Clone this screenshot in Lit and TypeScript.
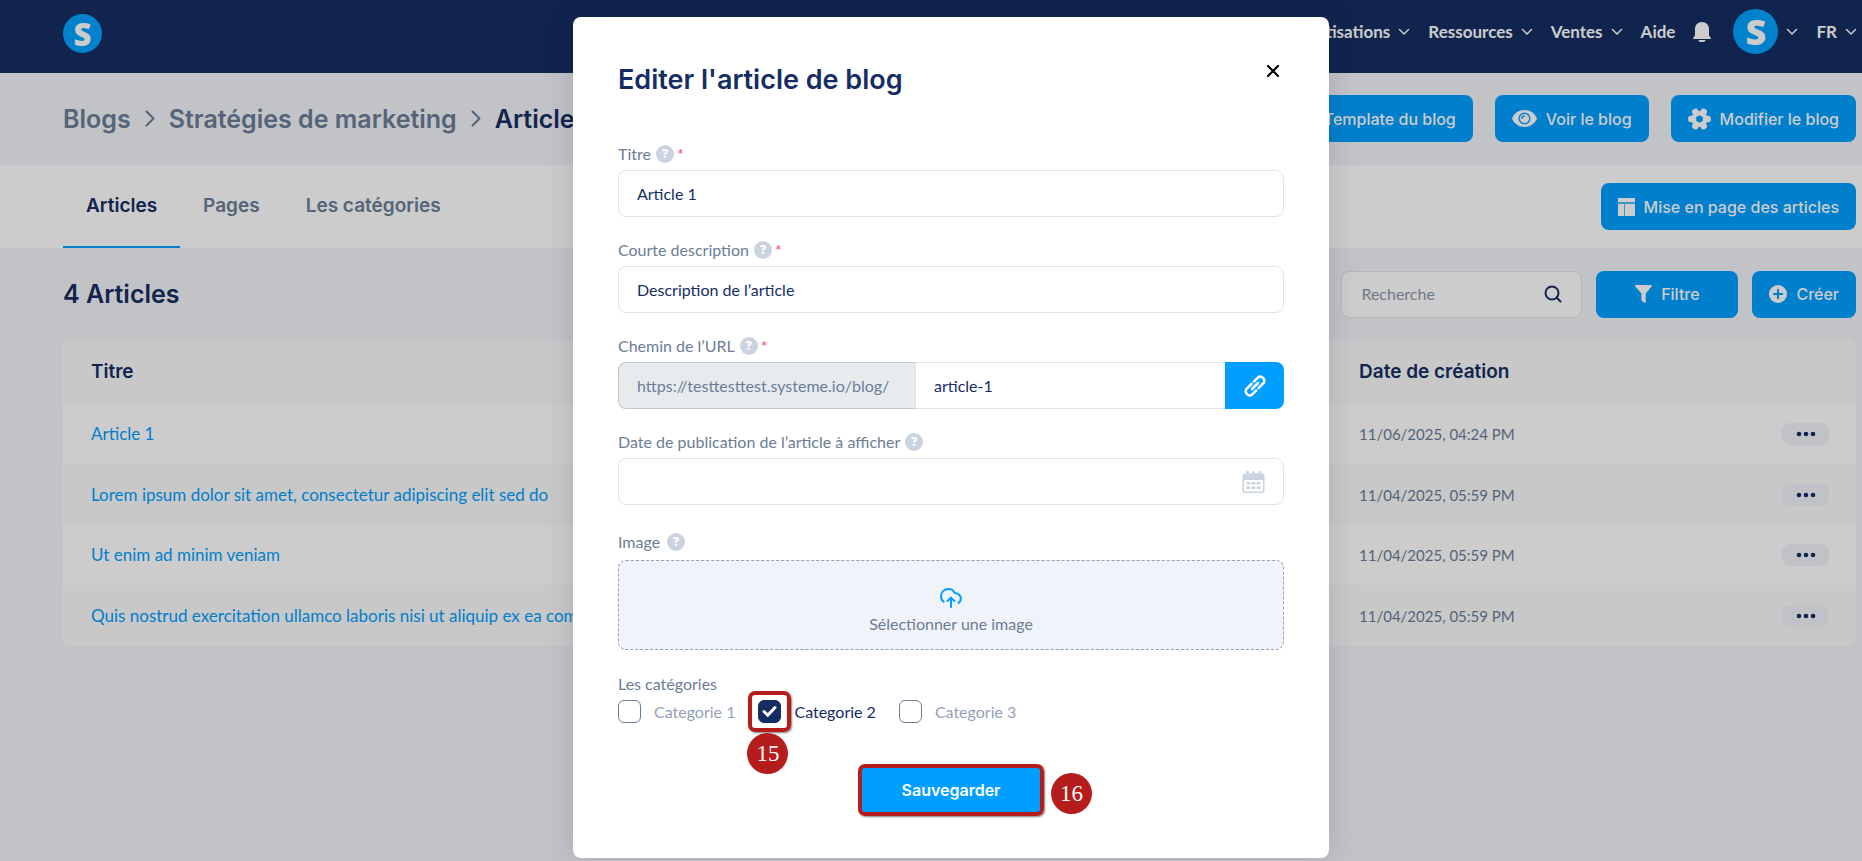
import { LitElement, html, css, svg } from "lit";
import { customElement, state } from "lit/decorators.js";

const chevronDown = html`<svg class="chev" width="12" height="8" viewBox="0 0 12 8" aria-hidden="true">
  <path d="M1.5 1.5 6 6l4.500-4.500" fill="none" stroke="currentColor" stroke-width="1.500" stroke-linecap="round" stroke-linejoin="round"/></svg>`;

const chevronRight = html`<svg width="10" height="17" viewBox="0 0 10 17" aria-hidden="true">
  <path d="M1.500 1.500 8.500 8.500l-7 7" fill="none" stroke="currentColor" stroke-width="2" stroke-linecap="round" stroke-linejoin="round"/></svg>`;

const bell = html`<svg width="18" height="20" viewBox="0 0 18 20" aria-hidden="true">
  <path d="M9 0C4.800 0 2 3 2 7v5.500c0 1.300-.6 2-1.400 2.700-1 .9-.6 1.800.6 1.800h15.600c1.200 0 1.600-.9.6-1.800-.8-.7-1.400-1.400-1.400-2.700V7c0-4-2.800-7-7-7zM5.500 18h7c0 1.200-1 2-2 2h-3c-1 0-2-.8-2-2z" fill="currentColor"/></svg>`;

const eye = html`<svg width="25" height="17" viewBox="0 0 25 17" aria-hidden="true">
  <path d="M12.500 0C7 0 2.600 3 .3 7.700a1.800 1.800 0 0 0 0 1.600C2.600 14 7 17 12.500 17S22.400 14 24.700 9.300a1.800 1.800 0 0 0 0-1.600C22.400 3 18 0 12.500 0z" fill="currentColor"/>
  <circle cx="12.500" cy="8.500" r="6" fill="#009fff"/><circle cx="12.500" cy="8.500" r="4.600" fill="currentColor"/>
  <path d="M12.500 5.900a2.600 2.600 0 0 0-2.600 2.600" fill="none" stroke="#009fff" stroke-width="1.300" stroke-linecap="round"/></svg>`;

const gear = html`<svg width="23" height="22" viewBox="0 0 23 22" aria-hidden="true">
  <g fill="currentColor">${[30, 90, 150, 210, 270, 330].map(
    (a) => svg`<rect x="8.300" y="-.3" width="6.400" height="8" rx="2.500" transform="rotate(${a} 11.500 11)"/>`
  )}</g>
  <circle cx="11.500" cy="11" r="5.900" fill="none" stroke="currentColor" stroke-width="4.400"/></svg>`;

const layoutIcon = html`<svg width="17" height="18" viewBox="0 0 17 18" aria-hidden="true">
  <path d="M0 0h17v4H0zM0 6h6v12H0zM7 6h10v12H7z" fill="currentColor"/>
  <path d="M0 4h17v2H0zM6 6h1v12H6z" fill="currentColor" opacity=".3"/></svg>`;

const funnel = html`<svg width="17" height="18" viewBox="0 0 17 18" aria-hidden="true">
  <path d="M.8 0h15.400c.7 0 1 .8.600 1.300L10.700 8.500v8.700c0 .6-.7 1-1.200.6l-2.700-2a1 1 0 0 1-.4-.8V8.500L.2 1.300C-.3.800.1 0 .8 0z" fill="currentColor"/></svg>`;

const plus = html`<svg width="18" height="18" viewBox="0 0 18 18" aria-hidden="true">
  <circle cx="9" cy="9" r="9" fill="currentColor"/>
  <path d="M9 4.800v8.400M4.800 9h8.400" stroke="#009fff" stroke-width="2" stroke-linecap="round"/></svg>`;

const magnifier = html`<svg class="magnifier" width="18" height="18" viewBox="0 0 18 18" aria-hidden="true">
  <circle cx="8" cy="8" r="6.500" fill="none" stroke="currentColor" stroke-width="2"/>
  <path d="M12.500 12.500 16.500 16.500" stroke="currentColor" stroke-width="2" stroke-linecap="round"/></svg>`;

const dots = html`<svg width="20" height="6" viewBox="0 0 20 6" aria-hidden="true">
  <g fill="currentColor"><circle cx="3" cy="3" r="2.300"/><circle cx="10" cy="3" r="2.300"/><circle cx="17" cy="3" r="2.300"/></g></svg>`;

const linkIcon = html`<svg width="22" height="22" viewBox="0 0 22 22" aria-hidden="true">
  <g fill="none" stroke="currentColor" stroke-width="2.500" stroke-linecap="round" stroke-linejoin="round">
  <path d="M8 14l6-6"/>
  <path d="M9.800 6.600l4-4a4 4 0 0 1 5.600 5.600l-4.800 4.800"/>
  <path d="M12.200 15.400l-4 4a4 4 0 0 1-5.600-5.600l4.800-4.800"/></g></svg>`;

const calendar = html`<svg class="calendar" width="23" height="22" viewBox="0 0 23 22" aria-hidden="true">
  <path d="M3 2.500h17a2.500 2.500 0 0 1 2.500 2.500v14.500a2.500 2.500 0 0 1-2.500 2.500H3A2.500 2.500 0 0 1 .5 19.500V5A2.500 2.500 0 0 1 3 2.500zM2 9v10.300c0 .8.500 1.200 1.200 1.200h16.600c.7 0 1.200-.4 1.200-1.200V9z" fill="currentColor" fill-rule="evenodd"/>
  <path d="M5.500 1.300v3M11.500 1.300v3M17.500 1.300v3" stroke="currentColor" stroke-width="2.600" stroke-linecap="round"/>
  <path d="M4.500 12.300h3.800M9.600 12.300h3.800M14.700 12.300h3.800M4.500 16.800h3.800M9.600 16.800h3.800M14.700 16.800h3.800" stroke="currentColor" stroke-width="2.600"/></svg>`;

const upload = html`<svg width="22" height="20" viewBox="0 0 22 20" aria-hidden="true">
  <g fill="none" stroke="currentColor" stroke-width="2" stroke-linecap="round" stroke-linejoin="round">
  <path d="M3.600 13.800C1.800 12.500 1 10.600 1 8.300 1 4.200 4.200 1 8.300 1c2.900 0 5.300 1.500 6.300 4 3.400 0 6.200 2.300 6.200 5.500 0 1.900-.8 3.400-2.300 4.400"/>
  <path d="M11 19V10M7.500 13 11 9.600 14.500 13"/></g></svg>`;

const help = html`<button class="help" type="button" aria-label="Aide">?</button>`;
const star = html`<span class="star">*</span>`;

interface Article {
  title: string;
  date: string;
}

@customElement("app-root")
export class AppRoot extends LitElement {
  @state() private articles: Article[] = [
    { title: "Article 1", date: "11/06/2025, 04:24 PM" },
    { title: "Lorem ipsum dolor sit amet, consectetur adipiscing elit sed do", date: "11/04/2025, 05:59 PM" },
    { title: "Ut enim ad minim veniam", date: "11/04/2025, 05:59 PM" },
    { title: "Quis nostrud exercitation ullamco laboris nisi ut aliquip ex ea commodo", date: "11/04/2025, 05:59 PM" },
  ];

  static styles = css`
    :host {
      --navy: #152d62;
      --blue: #009fff;
      --slate: #6b7d96;
      --edge: #e0e4e6;
      display: block;
      position: relative;
      min-height: 100vh;
      overflow: hidden;
      background: #f3f4f9;
      color: var(--navy);
      font: 16px/24px Lato, "Open Sans", sans-serif;
    }
    *, *::before, *::after { box-sizing: border-box; }
    svg { display: block; flex: none; }
    a { color: inherit; text-decoration: none; }
    button, input { font: inherit; color: inherit; margin: 0; }
    button { border: 0; padding: 0; background: none; cursor: pointer; }
    h1, h2, ol, ul { margin: 0; padding: 0; list-style: none; }

    .navbar {
      display: flex;
      justify-content: space-between;
      padding: 9px 5px 19px 63px;
      background: var(--navy);
      color: #fff;
    }
    .logo, .avatar {
      display: grid;
      place-items: center;
      border-radius: 50%;
      background: #00a3ff;
      color: #fff;
      font-family: "Open Sans", sans-serif;
      font-weight: 800;
    }
    .logo { width: 39px; height: 39px; margin-top: 5px; font-size: 31px; }
    .avatar { width: 45px; height: 45px; font-size: 36px; }
    .menu { display: flex; align-items: center; gap: 18px; font-size: 17px; font-weight: 700; }
    .menu a, .menu button { display: flex; align-items: center; gap: 8px; font-weight: 700; }
    .menu .notify { margin-right: 4px; }

    .bar {
      display: flex;
      align-items: center;
      justify-content: space-between;
      padding: 0 6px 0 63px;
    }
    .heading { height: 92px; padding-bottom: 1px; }
    .tabs-bar { height: 83px; background: #fff; }
    .tools { height: 92px; }
    .crumbs, .crumbs li { display: flex; align-items: center; gap: 14px; }
    .crumbs { font: 600 25px/32px Inter, sans-serif; color: var(--slate); white-space: nowrap; }
    .crumbs .current { color: var(--navy); }
    .actions { display: flex; gap: 22px; }
    .btn {
      display: flex;
      align-items: center;
      justify-content: center;
      gap: 9px;
      height: 47px;
      padding: 0 17px;
      border-radius: 8px;
      background: var(--blue);
      color: #fff;
      font: 500 16px/24px Inter, sans-serif;
      white-space: nowrap;
    }
    .tabs { display: flex; align-self: stretch; }
    .tab {
      display: flex;
      align-items: center;
      padding: 0 23px;
      border-bottom: 2px solid transparent;
      color: var(--slate);
      font: 600 19px/24px Inter, sans-serif;
    }
    .tab.active { color: var(--navy); border-color: var(--blue); }
    .count { font: 600 25px/32px Inter, sans-serif; }
    .filters { display: flex; gap: 14px; }
    .search {
      display: flex;
      align-items: center;
      width: 241px;
      height: 47px;
      padding: 0 19px;
      border: 1px solid var(--edge);
      border-radius: 8px;
      background: #fff;
    }
    .search input { flex: 1; min-width: 0; border: 0; padding: 0; background: none; outline: 0; }
    .search input::placeholder { color: #8d99a8; opacity: 1; }
    .filter { width: 142px; }

    .list { padding: 0 6px 0 63px; }
    table {
      width: 100%;
      border-collapse: collapse;
      border-radius: 8px;
      overflow: hidden;
      background: #fff;
      table-layout: fixed;
    }
    th, td { padding: 0 28px; text-align: left; }
    tbody tr { height: 60px; }
    thead tr { height: 64px; background: #fafbfc; }
    tbody tr:nth-child(even) { height: 61px; background: #fafbfc; }
    th { font: 600 19px/24px Inter, sans-serif; }
    td { color: var(--slate); font-size: 15px; }
    td a { color: var(--blue); font-size: 17px; white-space: nowrap; }
    .date-col { width: 410px; }
    .more-col { width: 115px; }
    .more {
      display: grid;
      place-items: center;
      width: 47px;
      height: 22px;
      margin-left: auto;
      border-radius: 8px;
      background: #f1f3f9;
      color: var(--navy);
    }
    td:last-child { padding: 0 27px 0 0; }

    .overlay {
      position: absolute;
      inset: 0;
      display: flex;
      align-items: flex-start;
      justify-content: center;
      padding: 17px 0 0 40px;
      background: rgba(0, 0, 0, 0.2);
    }
    .modal {
      width: 756px;
      padding: 47px 45px 44px;
      border-radius: 8px;
      background: #fff;
      box-shadow: 0 0 30px rgba(20, 40, 60, 0.16);
    }
    .modal-head {
      display: flex;
      align-items: flex-start;
      justify-content: space-between;
      margin-bottom: 46px;
    }
    .modal-head h2 { font: 600 27px/32px Inter, sans-serif; }
    .close { padding: 1px 5px; color: #000; }
    .form { display: flex; flex-direction: column; }
    .field { margin-bottom: 21px; }
    .label {
      display: flex;
      align-items: center;
      gap: 5px;
      height: 24px;
      margin-bottom: 4px;
      color: var(--slate);
    }
    .help {
      width: 18px;
      height: 18px;
      border-radius: 50%;
      background: #cad4e1;
      color: #fff;
      font: 800 12px/18px "Open Sans", sans-serif;
      text-align: center;
    }
    .star { color: #ff3d71; margin-left: -2px; }
    .box {
      display: flex;
      align-items: center;
      width: 100%;
      height: 47px;
      padding: 0 18px;
      border: 1px solid var(--edge);
      border-radius: 8px;
      background: #fff;
      outline: 0;
    }
    .group { display: flex; }
    .prefix {
      display: flex;
      align-items: center;
      width: 298px;
      border: 1px solid #bec8cf;
      border-right-color: var(--edge);
      border-radius: 8px 0 0 8px;
      padding: 0 18px;
      background: #e8ebee;
      color: var(--slate);
    }
    .group .box { flex: 1; width: auto; min-width: 0; border-left: 0; border-right: 0; border-radius: 0; }
    .generate {
      display: grid;
      place-items: center;
      width: 59px;
      border-radius: 0 8px 8px 0;
      background: var(--blue);
      color: #fff;
    }
    .date input { flex: 1; min-width: 0; border: 0; padding: 0; outline: 0; }
    .calendar { color: #cad4e1; }
    .image { margin-top: 4px; margin-bottom: 22px; }
    .image .label { gap: 7px; margin-bottom: 6px; }
    .drop {
      display: flex;
      flex-direction: column;
      align-items: center;
      width: 100%;
      height: 90px;
      padding-top: 27px;
      gap: 4px;
      border: 1px dashed #90a4ae;
      border-radius: 8px;
      background: #f0f3f9;
      color: var(--slate);
    }
    .drop svg { color: var(--blue); }
    .checks { display: flex; gap: 23px; margin-bottom: 43px; }
    .check { display: flex; align-items: center; gap: 13px; height: 23px; color: #94a1b8; }
    .check.on { color: var(--navy); }
    .check input {
      appearance: none;
      width: 23px;
      height: 23px;
      border: 1px solid var(--slate);
      border-radius: 6px;
      background: #fff;
    }
    .check input:checked { border-color: var(--navy); background: var(--navy); }
    .tick { position: relative; display: grid; }
    .tick svg { position: absolute; inset: 5px 4px; color: #fff; pointer-events: none; }
    .frame {
      position: absolute;
      inset: -9px -10px;
      border: 4px solid #b51c1c;
      border-radius: 7px;
      box-shadow: 1px 1px 2px rgba(0, 0, 0, 0.5);
      pointer-events: none;
    }
    .step {
      position: absolute;
      display: grid;
      place-items: center;
      width: 41px;
      height: 41px;
      border-radius: 50%;
      background: #b51c1c;
      color: #fff;
      font: 23px/23px "Liberation Serif", serif;
    }
    .step-check { top: 33px; left: -11px; }
    .submit { position: relative; align-self: center; }
    .save { width: 182px; height: 48px; font-weight: 600; }
    .submit .frame { inset: -2px; }
    .step-save { top: 7px; left: 191px; }
  `;

  render() {
    return html`
      <header class="navbar">
        <a class="logo" href="#" aria-label="Accueil">S</a>
        <nav class="menu">
          <a href="#">Automatisations ${chevronDown}</a>
          <a href="#">Ressources ${chevronDown}</a>
          <a href="#">Ventes ${chevronDown}</a>
          <a href="#">Aide</a>
          <button class="notify" type="button" aria-label="Notifications">${bell}</button>
          <button type="button" aria-label="Compte"><span class="avatar">S</span>${chevronDown}</button>
          <button type="button">FR ${chevronDown}</button>
        </nav>
      </header>

      <section class="bar heading">
        <ol class="crumbs">
          <li><a href="#">Blogs</a>${chevronRight}</li>
          <li><a href="#">Stratégies de marketing</a>${chevronRight}</li>
          <li class="current">Article</li>
        </ol>
        <div class="actions">
          <button class="btn" type="button">${layoutIcon}Template du blog</button>
          <button class="btn" type="button">${eye}Voir le blog</button>
          <button class="btn" type="button">${gear}Modifier le blog</button>
        </div>
      </section>

      <section class="bar tabs-bar">
        <nav class="tabs">
          <a class="tab active" href="#">Articles</a>
          <a class="tab" href="#">Pages</a>
          <a class="tab" href="#">Les catégories</a>
        </nav>
        <button class="btn" type="button">${layoutIcon}Mise en page des articles</button>
      </section>

      <section class="bar tools">
        <h1 class="count">4 Articles</h1>
        <div class="filters">
          <div class="search">
            <input type="text" aria-label="Recherche" placeholder="Recherche" />${magnifier}
          </div>
          <button class="btn filter" type="button">${funnel}Filtre</button>
          <button class="btn" type="button">${plus}Créer</button>
        </div>
      </section>

      <section class="list">
        <table>
          <thead>
            <tr>
              <th>Titre</th>
              <th class="date-col">Date de création</th>
              <th class="more-col"></th>
            </tr>
          </thead>
          <tbody>
            ${this.articles.map(
              (a) => html`<tr>
                <td><a href="#">${a.title}</a></td>
                <td>${a.date}</td>
                <td><button class="more" type="button" aria-label="Actions">${dots}</button></td>
              </tr>`
            )}
          </tbody>
        </table>
      </section>

      <div class="overlay">
        <section class="modal" role="dialog" aria-labelledby="dialog-title">
          <div class="modal-head">
            <h2 id="dialog-title">Editer l'article de blog</h2>
            <button class="close" type="button" aria-label="Fermer">
              <svg width="12" height="12" viewBox="0 0 12 12" aria-hidden="true">
                <path d="M1 1l10 10M11 1 1 11" stroke="currentColor" stroke-width="2.200" stroke-linecap="round" />
              </svg>
            </button>
          </div>
          <form class="form">
            <div class="field">
              <div class="label"><label for="title">Titre</label>${help}${star}</div>
              <input class="box" id="title" type="text" .value=${"Article 1"} />
            </div>
            <div class="field">
              <div class="label"><label for="description">Courte description</label>${help}${star}</div>
              <input class="box" id="description" type="text" .value=${"Description de l’article"} />
            </div>
            <div class="field">
              <div class="label"><label for="path">Chemin de l’URL</label>${help}${star}</div>
              <div class="group">
                <span class="prefix">https://testtesttest.systeme.io/blog/</span>
                <input class="box" id="path" type="text" .value=${"article-1"} />
                <button class="generate" type="button" aria-label="Copier le lien">${linkIcon}</button>
              </div>
            </div>
            <div class="field">
              <div class="label"><label for="date">Date de publication de l’article à afficher</label>${help}</div>
              <div class="box date"><input id="date" type="text" />${calendar}</div>
            </div>
            <div class="field image">
              <div class="label"><span id="image-label">Image</span>${help}</div>
              <button class="drop" type="button" aria-describedby="image-label">${upload}<span>Sélectionner une image</span></button>
            </div>
            <div class="label">Les catégories</div>
            <div class="checks">
              <label class="check"><input type="checkbox" />Categorie 1</label>
              <label class="check on">
                <span class="tick">
                  <input type="checkbox" checked />
                  <svg width="15" height="13" viewBox="0 0 15 13" aria-hidden="true">
                    <path d="M2 6.500 5.800 10.300 13 2.500" fill="none" stroke="currentColor" stroke-width="3" stroke-linecap="round" stroke-linejoin="round" />
                  </svg>
                  <span class="frame"></span>
                  <span class="step step-check">15</span>
                </span>Categorie 2</label>
              <label class="check"><input type="checkbox" />Categorie 3</label>
            </div>
            <div class="submit">
              <button class="btn save" type="button">Sauvegarder</button>
              <span class="frame"></span>
              <span class="step step-save">16</span>
            </div>
          </form>
        </section>
      </div>
    `;
  }
}
